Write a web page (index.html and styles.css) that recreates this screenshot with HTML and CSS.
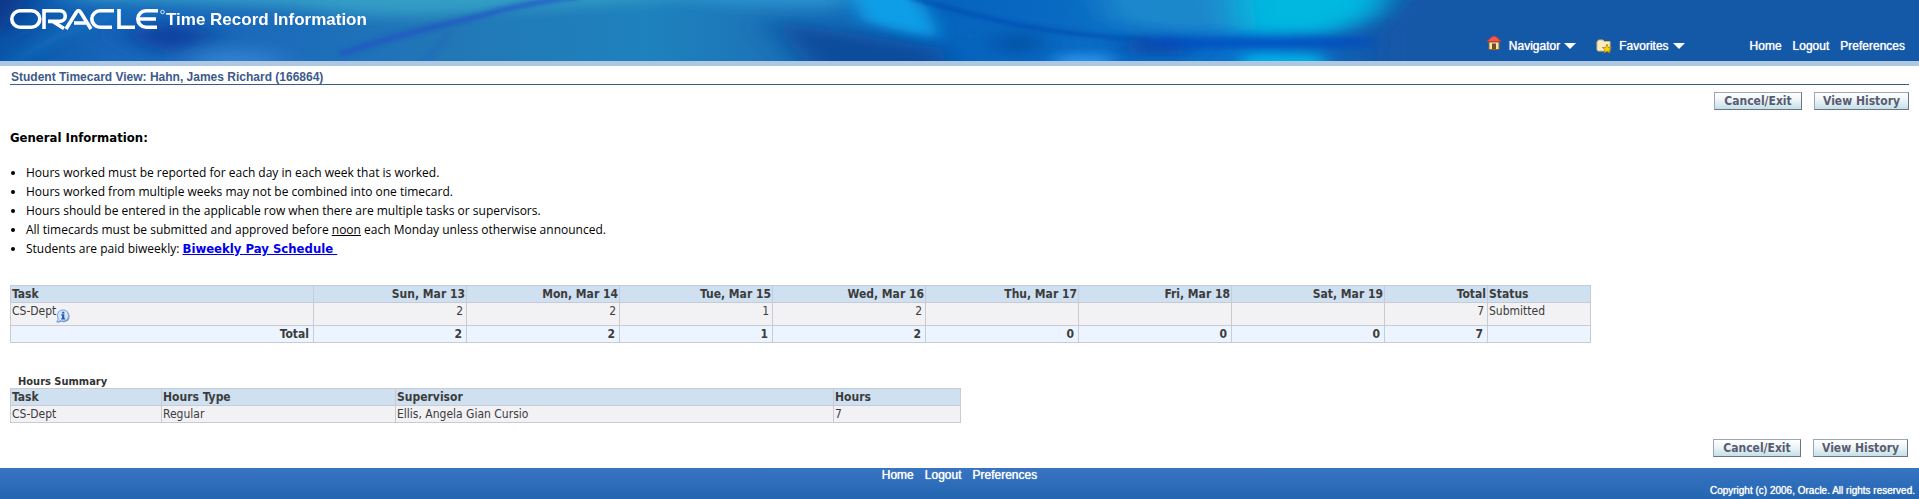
FILE: index.html
```html
<!DOCTYPE html>
<html lang="en">
<head>
<meta charset="utf-8">
<title>Time Record Information</title>
<link rel="stylesheet" href="styles.css">
</head>
<body>
<header class="banner">
  <svg class="banner-art" viewBox="0 0 1440 61" preserveAspectRatio="xMinYMin slice" aria-hidden="true">
    <defs>
      <linearGradient id="base" x1="0" x2="1">
        <stop offset="0" stop-color="#0a54a8"/>
        <stop offset=".08" stop-color="#1767bb"/>
        <stop offset=".2" stop-color="#1c6cba"/>
        <stop offset=".32" stop-color="#2278b6"/>
        <stop offset=".45" stop-color="#1e82be"/>
        <stop offset=".53" stop-color="#1c74b8"/>
        <stop offset=".6" stop-color="#1268b8"/>
        <stop offset=".66" stop-color="#0664be"/>
        <stop offset=".76" stop-color="#0a6cc4"/>
        <stop offset=".88" stop-color="#0872cc"/>
        <stop offset=".96" stop-color="#1458a8"/>
        <stop offset="1" stop-color="#1458a8"/>
      </linearGradient>
      <filter id="soft" filterUnits="userSpaceOnUse" x="-60" y="-60" width="1560" height="190"><feGaussianBlur stdDeviation="18 7"/></filter>
      <filter id="mid" filterUnits="userSpaceOnUse" x="-60" y="-60" width="1560" height="190"><feGaussianBlur stdDeviation="9 4"/></filter>
      <filter id="fine" filterUnits="userSpaceOnUse" x="-60" y="-60" width="1560" height="190"><feGaussianBlur stdDeviation="2"/></filter>
    </defs>
    <rect width="1440" height="61" fill="url(#base)"/>
    <g filter="url(#soft)">
      <path d="M70-30H700V-4Q600 4 480 12Q380 22 300 8Q180 2 70 0Z" fill="#36a4c8" opacity=".85"/>
      <path d="M-40-30H50L0 34H-40Z" fill="#083488"/>
      <path d="M120 34L170 20L220 34L170 56Z" fill="#0840a0"/>
      <path d="M180 90L200 50H270L300 90Z" fill="#3080d0"/>
      <path d="M700-30H850V8L700 4Z" fill="#2a94d0"/>
      <path d="M770 20L940 48L960 90H830Z" fill="#0c4c9c"/>
      <path d="M1090-30H1240V30L1180 32L1110 22Z" fill="#1c88cc"/>
      <path d="M1230-40H1400L1380 14L1330 34H1240Z" fill="#00b8e0"/>
      <path d="M1125 40H1180L1190 54H1130Z" fill="#083c9c"/>
      <path d="M1000 34H1040L1030 54H1000Z" fill="#044c9c"/>
    </g>
    <g filter="url(#mid)">
      <path d="M845-20H900Q930 4 938 38Q890 30 862 20Z" fill="#10a4ec" opacity=".9"/>
      <path d="M1246 54H1320L1340 90H1230Z" fill="#00b0e8"/>
      <path d="M1060 54H1110V90H1044Z" fill="#2890ea"/>
      <path d="M1150 42Q1230 44 1370 42" fill="none" stroke="#0048c0" stroke-width="8"/>
      <path d="M1384 90V34L1440-30H1520V90Z" fill="#1458a8"/>
      <path d="M0 74Q50 32 120 14" fill="none" stroke="#1480cc" stroke-width="8" opacity=".5"/>
    </g>
    <g filter="url(#fine)" fill="none">
      <path d="M340 54Q400 34 480 16Q520 4 580-4" stroke="#2454c4" stroke-width="6" opacity=".75"/>
      <path d="M420 62Q440 50 450 30" stroke="#2860c0" stroke-width="5" opacity=".4"/>
      <path d="M910-3Q980 18 1030 27T1150 40" stroke="#044cb0" stroke-width="3"/>
    </g>
  </svg>
  <div class="brand">
    <svg class="logo" viewBox="0 0 155 21" role="img" aria-label="Oracle">
      <g fill="none" stroke="#fff" stroke-width="3.600">
        <rect x="1.800" y="1.800" width="28" height="16.400" rx="8.200"/>
        <path d="M34 20V1.800H50A4.600 4.600 0 0 1 50 12.400H38M42 12L54 19.500"/>
        <path d="M56 20L66.500 3Q68.500.5 70.500 3L81 20M64 14H76"/>
        <path d="M104 1.800H90A8.200 8.200 0 0 0 90 18.200H102"/>
        <path d="M109 0V18.200H125"/>
        <path d="M148 1.800H136A8.200 8.200 0 0 0 136 18.200H147M128 10H146"/>
      </g>
      <circle cx="152.500" cy="3" r="1.800" fill="none" stroke="#fff" stroke-width=".8"/>
    </svg>
    <h1 class="app-title">Time Record Information</h1>
  </div>
  <nav class="global-nav">
    <button class="menu" type="button">
      <svg class="icon home" viewBox="0 0 16 16" aria-hidden="true"><path d="M3 7H13V14.500H3Z" fill="#f4e4a8" stroke="#8a6830"/><path d="M6 8.500H10V14H6Z" fill="#7a4a28"/><path d="M1 6.500L5.500 2L8 1L10.500 2L15 6.500Z" fill="#ee5a4e" stroke="#c03a34"/></svg>
      Navigator <span class="arrow"></span>
    </button>
    <button class="menu" type="button">
      <svg class="icon" viewBox="0 0 16 16" aria-hidden="true"><path d="M1 4L2.500 2H7L8 3.500H14V13H2L1 12Z" fill="#f8ecc0" stroke="#d8b870"/><path d="M11 6L12.300 9.500H15.700L13 11.600L14 15.200L11 13L8 15.200L9 11.600L6.300 9.500H9.700Z" fill="#ffd400" stroke="#a87800" stroke-width=".7"/></svg>
      Favorites <span class="arrow"></span>
    </button>
    <div class="links"><a href="#">Home</a><a href="#">Logout</a><a href="#">Preferences</a></div>
  </nav>
</header>
<main class="page">
  <h2 class="page-title">Student Timecard View: Hahn, James Richard (166864)</h2>
  <div class="actions"><button class="btn" type="button">Cancel/Exit</button><button class="btn" type="button">View History</button></div>
  <section class="info">
    <h3>General Information:</h3>
    <ul>
      <li>Hours worked must be reported for each day in each week that is worked.</li>
      <li>Hours worked from multiple weeks may not be combined into one timecard.</li>
      <li>Hours should be entered in the applicable row when there are multiple tasks or supervisors.</li>
      <li>All timecards must be submitted and approved before <u>noon</u> each Monday unless otherwise announced.</li>
      <li>Students are paid biweekly: <a class="schedule" href="#">Biweekly Pay Schedule&nbsp;</a></li>
    </ul>
  </section>
  <table class="grid timecard">
    <colgroup><col class="c-task"><col class="c-day" span="7"><col class="c-total"><col class="c-total"></colgroup>
    <thead><tr><th>Task</th><th class="num">Sun, Mar 13</th><th class="num">Mon, Mar 14</th><th class="num">Tue, Mar 15</th><th class="num">Wed, Mar 16</th><th class="num">Thu, Mar 17</th><th class="num">Fri, Mar 18</th><th class="num">Sat, Mar 19</th><th class="num">Total</th><th>Status</th></tr></thead>
    <tbody><tr><td><span class="task">CS-Dept<svg class="tip" viewBox="0 0 16 16" role="img" aria-label="Details"><path d="M3 3Q8-1 13 3Q16 8 13 12Q9 15 5 13.500L.8 15L2.500 11.500Q0 7 3 3Z" fill="#8898b0" transform="translate(1 1)"/><path d="M3 3Q8-1 13 3Q16 8 13 12Q9 15 5 13.500L.8 15L2.500 11.500Q0 7 3 3Z" fill="#d4e6fc" stroke="#6c9ce0"/><path d="M7 3H9.500V5H7ZM6 6H9.500V10.500H10.500V12H6V10.500H7V7.500H6Z" fill="#2456b4"/></svg></span></td><td class="num">2</td><td class="num">2</td><td class="num">1</td><td class="num">2</td><td></td><td></td><td></td><td class="num">7</td><td>Submitted</td></tr></tbody>
    <tfoot><tr><th>Total</th><td>2</td><td>2</td><td>1</td><td>2</td><td>0</td><td>0</td><td>0</td><td>7</td><td></td></tr></tfoot>
  </table>
  <table class="grid summary">
    <caption>Hours Summary</caption>
    <colgroup><col class="s-task"><col class="s-type"><col class="s-sup"><col class="s-hours"></colgroup>
    <thead><tr><th>Task</th><th>Hours Type</th><th>Supervisor</th><th>Hours</th></tr></thead>
    <tbody><tr><td>CS-Dept</td><td>Regular</td><td>Ellis, Angela Gian Cursio</td><td>7</td></tr></tbody>
  </table>
  <div class="actions bottom"><button class="btn" type="button">Cancel/Exit</button><button class="btn" type="button">View History</button></div>
</main>
<footer class="footer">
  <nav class="links"><a href="#">Home</a><a href="#">Logout</a><a href="#">Preferences</a></nav>
  <p class="copyright">Copyright (c) 2006, Oracle. All rights reserved.</p>
</footer>
</body>
</html>
```
FILE: styles.css
```css
* { box-sizing: border-box; }
body { margin: 0; background: #fff; color: #000; font: 12px/19px "DejaVu Sans Condensed", Tahoma, sans-serif; }
h1, h2, h3, p, ul { margin: 0; padding: 0; }
button { font: inherit; }

.banner { position: relative; display: flex; justify-content: space-between; height: 66px; border-bottom: 5px solid #aec8e2; background: #1458a8; color: #fff; overflow: hidden; font-family: "Liberation Sans", Arial, sans-serif; }
.banner-art { position: absolute; left: 0; top: 0; width: 1440px; height: 61px; }
.brand { position: relative; display: flex; align-items: flex-start; padding: 9px 0 0 10px; }
.logo { width: 155px; height: 21px; }
.app-title { font-size: 17px; line-height: 21px; font-weight: bold; margin-left: 1px; }
.global-nav { position: relative; display: flex; align-items: flex-end; padding: 0 14px 7px 0; }
.menu { display: flex; align-items: center; padding: 0; border: 0; background: none; color: #fff; font-size: 12px; line-height: 16px; margin-right: 20px; text-shadow: 0 0 1px #fff; }
.icon { width: 16px; height: 16px; margin-right: 7px; }
.home { margin-top: -6px; }
.arrow { margin-left: 4px; border: 6px solid transparent; border-top-color: #fff; border-bottom: 0; }
.links { display: flex; gap: 11px; font-size: 12px; line-height: 16px; }
.links a { color: #fff; text-decoration: none; text-shadow: 0 0 1px #fff; }
.global-nav .links { margin-left: 45px; }

.page { padding: 0 10px; }
.page-title { border-bottom: 1px solid #3c5a8a; padding: 4px 1px 0; font: bold 12px/14px "Liberation Sans", Arial, sans-serif; color: #3c5a8a; }
.actions { display: flex; justify-content: flex-end; gap: 12px; margin-top: 7px; }
.btn { min-width: 88px; height: 18px; padding: 1px 8px 0; border: 1px solid #a0a4b4; border-right-color: #6c7488; border-bottom-color: #6c7488; background: linear-gradient(#fff, #f0f6f8 40%, #c4e0e8); color: #585c70; font-weight: bold; font-size: 12px; line-height: 15px; }
.info { margin-top: 18px; }
.info h3 { font-size: 13px; line-height: 19px; }
.info ul { margin-top: 16px; padding-left: 16px; font-family: "Open Sans", Tahoma, sans-serif; }
.schedule { color: #00e; font-weight: bold; font-size: 13px; line-height: 16px; font-family: "DejaVu Sans Condensed", Tahoma, sans-serif; }

.grid { border-collapse: collapse; table-layout: fixed; font-size: 12px; line-height: 15px; color: #3c3c3c; }
.grid th, .grid td { border: 1px solid #c8cad4; padding: 1px 1px 0; text-align: left; vertical-align: top; }
.grid thead th { background: #cfe0f1; }
.grid tbody td { background: #f2f1f4; }
.grid .num { text-align: right; }
.grid td.num { padding-right: 3px; }
.grid tfoot th, .grid tfoot td { background: #ecf5ff; font-weight: bold; text-align: right; padding-right: 4px; }
.timecard { width: 83.25%; margin-top: 27px; }
.c-task { width: 303px; } .c-day { width: 153px; } .c-total { width: 103px; }
.task { display: flex; height: 21px; }
.tip { width: 14px; height: 14px; margin-top: 5px; }
.summary { width: 50%; margin-top: 31px; }
.summary caption { text-align: left; padding: 1px 0 0 8px; font-size: 11px; line-height: 13px; font-weight: bold; color: #333; }
.s-task { width: 151px; } .s-type { width: 234px; } .s-sup { width: 438px; } .s-hours { width: 127px; }
.actions.bottom { margin-top: 16px; padding-right: 1px; }

.footer { margin-top: 11px; min-height: 31px; background: linear-gradient(#3874c2, #2466b0); color: #fff; font-family: "Liberation Sans", Arial, sans-serif; }
.footer .links { justify-content: center; gap: 11px; line-height: 14px; }
.copyright { text-align: right; padding-right: 4px; font-size: 10px; line-height: 17px; text-shadow: 0 0 1px #fff; }
```
